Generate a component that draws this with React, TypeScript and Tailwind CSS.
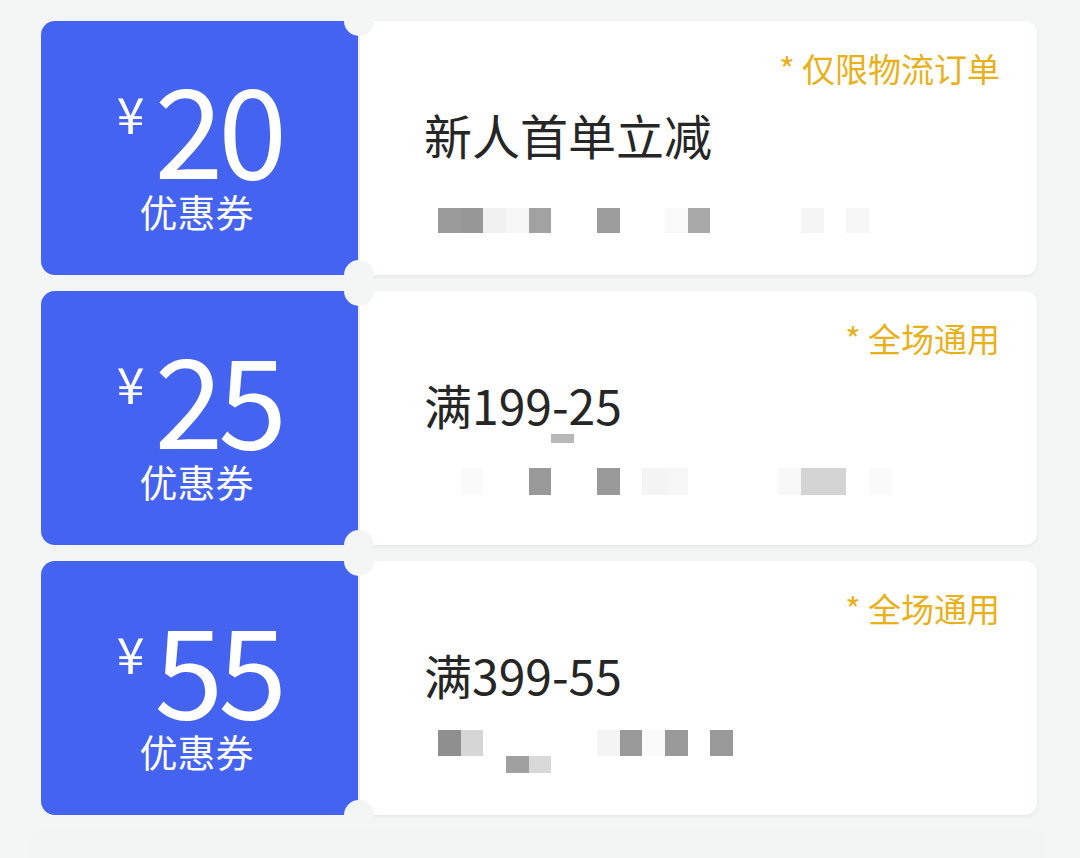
import React from "react";

type Row = { mt: string; h: string; cells: string[] };

type Coupon = {
  amount: string;
  tag: string;
  title: string;
  rows: Row[];
};

// cell classes, one per 23px mosaic cell ("" = empty)
const coupons: Coupon[] = [
  {
    amount: "20",
    tag: "* 仅限物流订单",
    title: "新人首单立减",
    rows: [
      {
        mt: "mt-[50px]",
        h: "h-[25px]",
        cells: ["bg-[#9b9b9b]", "bg-[#979797]", "bg-[#f0f0f0]", "bg-[#f7f7f7]", "bg-[#a2a2a2]", "", "", "bg-[#9c9c9c]", "", "", "bg-[#f9f9f9]", "bg-[#a8a8a8]", "", "", "", "", "bg-[#f5f5f5]", "", "bg-[#f7f7f7]"],
      },
    ],
  },
  {
    amount: "25",
    tag: "* 全场通用",
    title: "满199-25",
    rows: [
      {
        mt: "mt-[6px]",
        h: "h-[9px]",
        cells: ["", "", "", "", "", "bg-[#b8b8b8]"],
      },
      {
        mt: "mt-[25px]",
        h: "h-[27px]",
        cells: ["", "bg-[#fafafa]", "", "", "bg-[#999999]", "", "", "bg-[#999999]", "", "bg-[#f4f4f4]", "bg-[#f6f6f6]", "", "", "", "", "bg-[#f8f8f8]", "bg-[#d4d4d4]", "bg-[#d4d4d4]", "", "bg-[#fafafa]"],
      },
    ],
  },
  {
    amount: "55",
    tag: "* 全场通用",
    title: "满399-55",
    rows: [
      {
        mt: "mt-[32px]",
        h: "h-[26px]",
        cells: ["bg-[#8f8f8f]", "bg-[#d6d6d6]", "", "", "", "", "", "bg-[#f4f4f4]", "bg-[#999999]", "bg-[#fafafa]", "bg-[#9a9a9a]", "", "bg-[#999999]"],
      },
      {
        mt: "mt-0",
        h: "h-[17px]",
        cells: ["", "", "", "bg-[#a0a0a0]", "bg-[#d9d9d9]"],
      },
    ],
  },
];

function CouponCard({ c }: { c: Coupon }) {
  return (
    <div className="relative flex h-[254px] gap-[2px]">
      {/* left blue stub */}
      <div className="flex w-[317px] shrink-0 flex-col items-center rounded-l-[14px] rounded-r-[4px] bg-[#4563f1] pt-[54px] text-white">
        <div className="flex items-start">
          <span className="mt-[12px] mr-[10px] text-[50px] leading-none">¥</span>
          <span className="text-[124px] leading-[100px] tracking-[-5px]">{c.amount}</span>
        </div>
        <span className="mt-[17px] ml-[-6px] text-[38px] leading-none">优惠券</span>
      </div>

      {/* right white part */}
      <div className="flex flex-1 flex-col rounded-[12px] bg-white pt-[31px] pl-[78px] pr-[37px] shadow-[0_2px_4px_rgba(0,0,0,0.06)]">
        <span className="self-end text-[33px] leading-none text-[#e8b01a]">{c.tag}</span>
        <span className="mt-[25px] -ml-[14px] text-[48px] leading-none text-[#262626]">{c.title}</span>
        {c.rows.map((r, i) => (
          <div key={i} className={`flex ${r.mt} ${r.h}`}>
            {r.cells.map((cl, j) => (
              <div key={j} className={`h-full w-[22.7px] shrink-0 ${cl}`} />
            ))}
          </div>
        ))}
      </div>

      {/* notches */}
      <div className="absolute -top-[15px] left-[303px] h-[30px] w-[30px] rounded-full bg-[#f4f5f5]" />
      <div className="absolute -bottom-[15px] left-[303px] h-[30px] w-[30px] rounded-full bg-[#f4f5f5]" />
    </div>
  );
}

export default function App() {
  return (
    <div
      className="h-[858px] w-[1080px] overflow-hidden bg-[#f4f5f5] pt-[21px] pl-[41px] pr-[43px]"
      style={{ fontFamily: '"Noto Sans CJK SC", "Noto Sans", sans-serif' }}
    >
      <div className="flex flex-col gap-[16px]">
        {coupons.map((c) => (
          <CouponCard key={c.amount} c={c} />
        ))}
        <div className="ml-[-12px] mr-[-8px] h-[40px] rounded-[12px] bg-[#f1f4f2]" />
      </div>
    </div>
  );
}
